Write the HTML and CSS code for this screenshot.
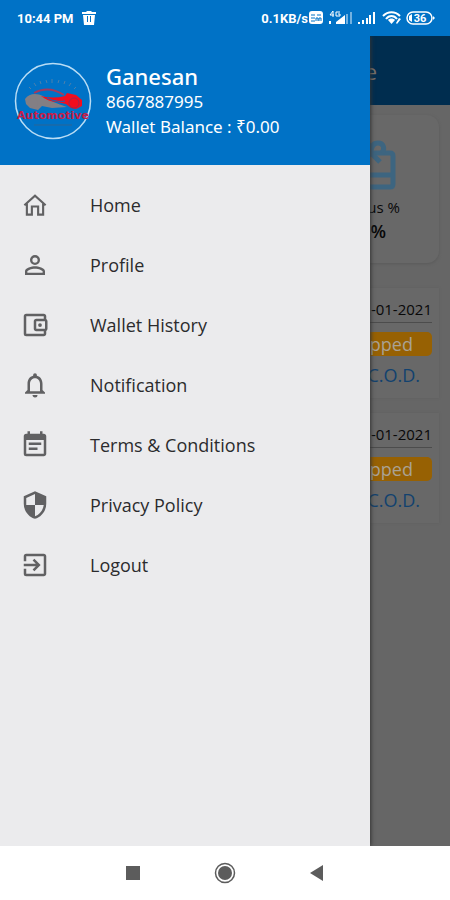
FILE: index.html
```html
<!DOCTYPE html>
<html lang="en">
<head>
  <meta charset="UTF-8" />
  <meta name="viewport" content="width=device-width, initial-scale=1.0" />
  <title>Automotive</title>
  <link rel="stylesheet" href="styles.css">
</head>
<body>
  <div class="status-bar">
    <span>10:44 PM</span>
    <svg class="trash" width="14" height="16" viewBox="0 0 14 16" fill="#fff">
      <path fill-rule="evenodd" d="M0 2h4l1-1h4l1 1h4v2H0zM1 5h12l-1 10H2zM5 6v6h1V6zM8 6v6h1V6z"/>
    </svg>
    <span class="speed">0.1KB/s</span>
    <svg class="status-icons" width="128" height="20" viewBox="0 0 128 20" fill="#fff">
      <rect x="1" y="3" width="14" height="13" rx="3"/>
      <path d="M3 7h4M9 7h4M3 10h4M3 13h4M8 13v-3h2v3M11 13v-3h2v3" stroke="#0072c6" fill="none"/>
      <path d="M25 3l-3 4h4M25 3v6M32 4h-4v4h4V6h-2" stroke="#fff" fill="none"/>
      <path d="M21 13h2v3h-2zM28 14l9-7v9h-9z"/>
      <path d="M38 6h2v10h-2zM42 4h2v12h-2z" opacity=".45"/>
      <path d="M50 14h2v2h-2zM54 12h2v4h-2zM58 10h2v6h-2zM61 7h2v9h-2zM65 4h2v12h-2z"/>
      <path d="M75 8c5-5 12-5 17 0M78 11c3-4 8-4 11 0" stroke="#fff" stroke-width="2" fill="none"/>
      <path d="M80 12c2-2 5-2 7 0l-3.500 4zM88 15l3-5 2 1-4 5z"/>
      <rect x="99" y="4" width="25" height="12" rx="6" fill="none" stroke="#fff" stroke-width="1.500"/>
      <path d="M125 8v4l2-2zM101 8l3-2v8l-3-2z"/>
      <text x="112" y="14" text-anchor="middle" class="battery-text">36</text>
    </svg>
  </div>

  <div class="screen">
    <main class="page">
      <header class="page-header">e</header>
      <div class="page-body">
        <section class="bonus-card">
          <svg width="50" height="52" viewBox="0 0 50 52" fill="none" stroke="#3d6580" stroke-width="5">
            <path d="M8 14h36q3 0 3 3v28q0 3-3 3H6q-3 0-3-3V17q0-3 3-3zM3 36h44"/>
            <path d="M25 14l-9 9M25 14l9 9M25 14c0-6 2-10 7-10 6 0 7 6 4 10M25 14c0-6-2-10-7-10-6 0-7 6-4 10"/>
          </svg>
          <span>us %</span>
          <strong>%</strong>
        </section>
        <section class="order-card">
          <span class="order-date">-01-2021</span>
          <span class="order-status">opped</span>
          <span class="order-payment">C.O.D.</span>
        </section>
        <section class="order-card">
          <span class="order-date">-01-2021</span>
          <span class="order-status">opped</span>
          <span class="order-payment">C.O.D.</span>
        </section>
      </div>
    </main>

    <aside class="drawer">
      <div class="profile">
        <svg class="avatar" width="78" height="78" viewBox="0 0 78 78">
          <circle cx="39" cy="39" r="37.500" fill="none" stroke="#b9ddf5" stroke-width="1.500"/>
          <path d="M15 25l2 2M20 21l2 3M26 19l1 3M32 18l1 3M38 17v4M45 18l-1 3M51 19l-1 3M57 21l-2 3M62 25l-2 2" stroke="#4d80ac"/>
          <path d="M11 37c4-6 12-6 18-3 6 4 14 8 24 11l-15 1-10-2-4 4-8-2-4-4z" fill="#837f84"/>
          <path d="M20 31c9-5 19-5 30 2" fill="none" stroke="#a03a60" stroke-width="2"/>
          <path d="M27 34c8 2 16 2 24 0l2-3 9 2 6 5v6l-6 3-5-1-5-4-9-2c-6 0-12-3-16-6z" fill="#f20d1d"/>
          <path d="M33 36c6 3 12 4 18 3" fill="none" stroke="#0072c6"/>
          <circle cx="19" cy="41" r="5" fill="#837f84"/>
          <circle cx="60" cy="41" r="5" fill="#f20d1d" stroke="#9b2850"/>
          <text x="39" y="57" text-anchor="middle" class="avatar-text">Automotive</text>
          <path d="M20 63h38" stroke="#2d6593"/>
        </svg>
        <div class="profile-info">
          <h1>Ganesan</h1>
          <p>8667887995</p>
          <p>Wallet Balance : ₹0.00</p>
        </div>
      </div>

      <nav class="menu">
        <a href="#home">
          <svg viewBox="0 0 24 24"><path fill="none" stroke="#616163" stroke-width="1.700" d="M3.500 12.200 12 4.500l8.500 7.700M5.500 11v8.700h4v-6.500h5v6.500h4V11"/></svg>
          Home
        </a>
        <a href="#profile">
          <svg viewBox="0 0 24 24"><path d="M12 5.900a2.100 2.100 0 1 1 0 4.200 2.100 2.100 0 0 1 0-4.200m0 9c2.970 0 6.100 1.460 6.100 2.100v1.100H5.900V17c0-.64 3.130-2.100 6.100-2.100M12 4a4 4 0 1 0 0 8 4 4 0 0 0 0-8zm0 9c-2.670 0-8 1.340-8 4v3h16v-3c0-2.660-5.330-4-8-4z"/></svg>
          Profile
        </a>
        <a href="#wallet">
          <svg viewBox="0 0 24 24"><path d="M21 7.280V5c0-1.100-.9-2-2-2H5a2 2 0 0 0-2 2v14a2 2 0 0 0 2 2h14c1.100 0 2-.9 2-2v-2.280A2 2 0 0 0 22 15V9a2 2 0 0 0-1-1.720zM20 9v6h-7V9h7zM5 19V5h14v2h-6c-1.100 0-2 .9-2 2v6c0 1.100.9 2 2 2h6v2H5z"/><circle cx="16" cy="12" r="1.500"/></svg>
          Wallet History
        </a>
        <a href="#notification">
          <svg viewBox="0 0 24 24"><path d="M12 22a2 2 0 0 0 2-2h-4c0 1.100.9 2 2 2zm6-6v-5c0-3.070-1.630-5.640-4.500-6.320V4a1.500 1.500 0 0 0-3 0v.68C7.640 5.360 6 7.920 6 11v5l-2 2v1h16v-1l-2-2zm-2 1H8v-6c0-2.480 1.510-4.500 4-4.500s4 2.020 4 4.500v6z"/></svg>
          Notification
        </a>
        <a href="#terms">
          <svg viewBox="0 0 24 24"><path d="M17 10H7v2h10v-2zm2-7h-1V1h-2v2H8V1H6v2H5a2 2 0 0 0-2 2v14a2 2 0 0 0 2 2h14c1.100 0 2-.9 2-2V5c0-1.100-.9-2-2-2zm0 16H5V8h14v11zm-5-5H7v2h7v-2z"/></svg>
          Terms &amp; Conditions
        </a>
        <a href="#privacy">
          <svg viewBox="0 0 24 24"><path d="M12 1 3 5v6c0 5.550 3.840 10.740 9 12 5.160-1.260 9-6.450 9-12V5l-9-4zm0 10.990h7c-.53 4.120-3.280 7.790-7 8.940V12H5V6.300l7-3.110v8.800z"/></svg>
          Privacy Policy
        </a>
        <a href="#logout">
          <svg viewBox="0 0 24 24"><path d="M10.090 15.590 11.500 17l5-5-5-5-1.410 1.410L12.670 11H3v2h9.670l-2.580 2.590zM19 3H5a2 2 0 0 0-2 2v4h2V5h14v14H5v-4H3v4a2 2 0 0 0 2 2h14c1.100 0 2-.9 2-2V5c0-1.100-.9-2-2-2z"/></svg>
          Logout
        </a>
      </nav>
    </aside>
  </div>

  <footer class="nav-bar">
    <button aria-label="Recent apps"><svg width="22" height="22" viewBox="0 0 22 22"><path d="M4 4h14v14H4z"/></svg></button>
    <button aria-label="Home screen"><svg width="22" height="22" viewBox="0 0 22 22"><circle cx="11" cy="11" r="9.500" fill="none" stroke="#5c5c5c" stroke-width="1.500"/><circle cx="11" cy="11" r="7"/></svg></button>
    <button aria-label="Back"><svg width="22" height="22" viewBox="0 0 22 22"><path d="M4 11 17 3v16z"/></svg></button>
  </footer>
</body>
</html>
```

FILE: styles.css
```css
* {
  box-sizing: border-box;
}
body {
  margin: 0;
  min-height: 100vh;
  display: flex;
  flex-direction: column;
  font-family: "Open Sans", "Noto Sans", sans-serif;
  background: #fff;
}
h1, p {
  margin: 0;
}

/* status bar */
.status-bar {
  display: flex;
  align-items: center;
  height: 36px;
  padding: 0 14px 0 17px;
  background: #0072c6;
  color: #fff;
  font-family: Roboto, sans-serif;
  font-size: 13px;
  font-weight: 700;
}
.trash {
  margin-left: 8px;
}
.speed {
  margin-left: auto;
}
.battery-text {
  font-size: 11px;
}

.screen {
  position: relative;
  flex: 1;
  display: flex;
  overflow: hidden;
  background: #666;
}

/* page behind the drawer */
.page {
  flex: 1;
}
.page-header {
  display: flex;
  align-items: center;
  justify-content: flex-end;
  height: 69px;
  padding-right: 73px;
  background: #002d4f;
  color: #77706a;
  font-size: 22px;
}
.page-body {
  display: flex;
  flex-direction: column;
  align-items: flex-end;
  padding: 10px 11px;
}
.bonus-card {
  display: flex;
  flex-direction: column;
  align-items: flex-end;
  width: 30%;
  height: 148px;
  margin-bottom: 25px;
  padding: 24px 39px 0 0;
  border-radius: 12px;
  background: #686868;
  box-shadow: 0 1px 3px #5a5a5a;
  color: #080808;
  font-size: 15px;
  line-height: 24px;
}
.bonus-card svg {
  margin: 0 4px 4px 0;
}
.bonus-card strong {
  margin-right: 14px;
  font-size: 18px;
  font-weight: 600;
}
.order-card {
  display: flex;
  flex-direction: column;
  width: 100%;
  height: 110px;
  margin-bottom: 15px;
  padding: 8px 7px;
  background: #686868;
  box-shadow: 0 0 2px #5f5f5f;
  text-align: right;
}
.order-date {
  height: 32px;
  margin-bottom: 9px;
  border-bottom: 1px solid #4c4c4c;
  color: #080808;
  font-size: 15px;
  font-weight: 500;
  line-height: 26px;
}
.order-status {
  padding-right: 19px;
  border-radius: 5px;
  background: #976103;
  color: #aaa294;
  font-size: 18px;
  line-height: 24px;
}
.order-payment {
  padding-right: 12px;
  color: #12426f;
  font-size: 18px;
  line-height: 38px;
}

/* drawer */
.drawer {
  position: absolute;
  top: 0;
  bottom: 0;
  left: 0;
  width: calc(100% - 80px);
  background: #ebebed;
  box-shadow: 1px 0 4px #333;
}
.profile {
  display: flex;
  align-items: center;
  gap: 14px;
  height: 129px;
  padding-left: 14px;
  background: #0072c6;
  color: #fff;
  font-family: "Noto Sans", sans-serif;
}
.avatar-text {
  fill: #c81c48;
  font-family: "DejaVu Sans", sans-serif;
  font-size: 11px;
  font-weight: 700;
}
.profile-info h1 {
  font-size: 22px;
  font-weight: 500;
  line-height: 26px;
}
.profile-info p {
  font-size: 17px;
  line-height: 25px;
}
.menu {
  padding-top: 10px;
}
.menu a {
  display: flex;
  align-items: center;
  gap: 40px;
  height: 60px;
  padding-left: 20px;
  color: #2b2b2d;
  font-size: 18px;
  text-decoration: none;
}
.menu svg {
  width: 30px;
  height: 30px;
  fill: #616163;
}

/* system buttons */
.nav-bar {
  display: flex;
  justify-content: center;
  gap: 70px;
  height: 54px;
}
.nav-bar button {
  display: flex;
  align-items: center;
  padding: 0;
  border: 0;
  background: none;
}
.nav-bar svg {
  fill: #5c5c5c;
}
```
